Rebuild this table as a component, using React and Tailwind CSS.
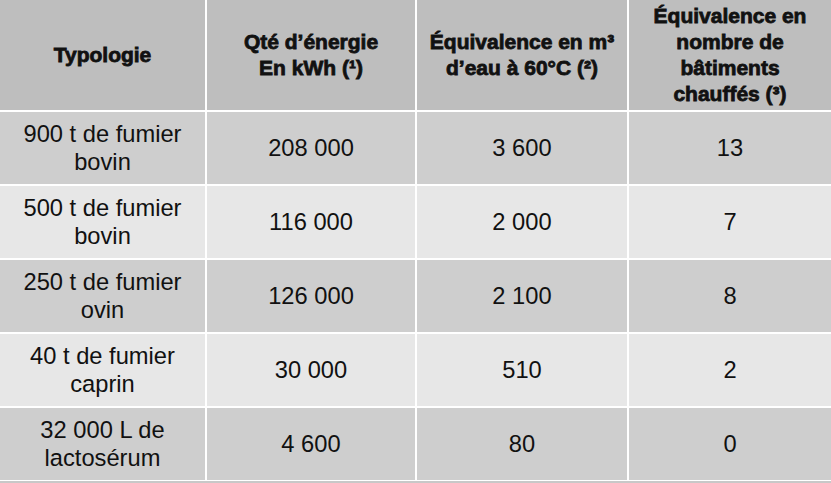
import React from 'react';

const rows = [
  { type: ['900 t de fumier', 'bovin'], kwh: '208 000', eau: '3 600', bat: '13' },
  { type: ['500 t de fumier', 'bovin'], kwh: '116 000', eau: '2 000', bat: '7' },
  { type: ['250 t de fumier', 'ovin'], kwh: '126 000', eau: '2 100', bat: '8' },
  { type: ['40 t de fumier', 'caprin'], kwh: '30 000', eau: '510', bat: '2' },
  { type: ['32 000 L de', 'lactosérum'], kwh: '4 600', eau: '80', bat: '0' },
];

function HeadCell({ lines }) {
  return (
    <div className="bg-[#bebebe] flex flex-col items-center justify-center text-center text-[21px] leading-[26px] font-bold text-[#111] [-webkit-text-stroke:0.8px_#111]">
      {lines.map((l, i) => (
        <span key={i} className="whitespace-nowrap">{l}</span>
      ))}
    </div>
  );
}

function Cell({ children, bg }) {
  return (
    <div className={`${bg} flex flex-col items-center justify-center text-center text-[23.7px] leading-[28px] text-[#111]`}>
      {children}
    </div>
  );
}

export default function App() {
  return (
    <div className="w-[831px] h-[483px] bg-[#c8c8c8] font-['Liberation_Sans',Arial,sans-serif] overflow-hidden">
      <div className="grid grid-cols-[205px_208px_210px_202px] grid-rows-[110px_repeat(5,72px)] gap-[2px] bg-white pb-[1px]">
        <HeadCell lines={['Typologie']} />
        <HeadCell lines={['Qté d’énergie', 'En kWh (¹)']} />
        <HeadCell lines={['Équivalence en m³', 'd’eau à 60°C (²)']} />
        <HeadCell lines={['Équivalence en', 'nombre de', 'bâtiments', 'chauffés (³)']} />

        {rows.map((r, i) => {
          const bg = i % 2 === 0 ? 'bg-[#cecece]' : 'bg-[#e7e7e7]';
          return (
            <React.Fragment key={i}>
              <Cell bg={bg}>
                <span className="whitespace-nowrap">{r.type[0]}</span>
                <span className="whitespace-nowrap">{r.type[1]}</span>
              </Cell>
              <Cell bg={bg}>{r.kwh}</Cell>
              <Cell bg={bg}>{r.eau}</Cell>
              <Cell bg={bg}>{r.bat}</Cell>
            </React.Fragment>
          );
        })}
      </div>
    </div>
  );
}
